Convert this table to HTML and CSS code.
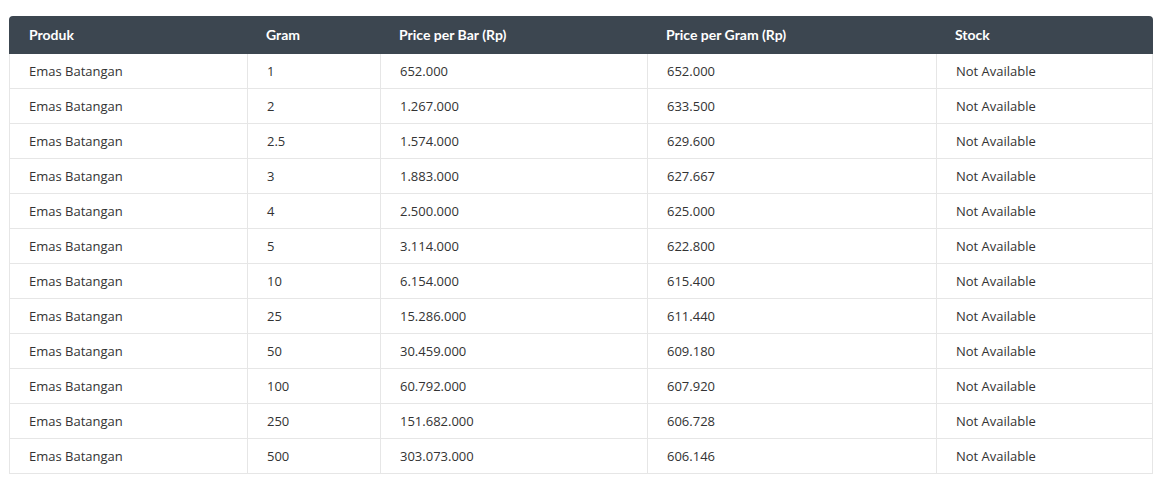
FILE: index.html
```html
<!DOCTYPE html>
<html>
<head>
<meta charset="utf-8">
<link rel="stylesheet" href="styles.css">
</head>
<body>
<div class="wrap">
<table class="price-table">
<colgroup>
<col class="c1"><col class="c2"><col class="c3"><col class="c4"><col class="c5">
</colgroup>
<thead>
<tr><th>Produk</th><th>Gram</th><th>Price per Bar (Rp)</th><th>Price per Gram (Rp)</th><th>Stock</th></tr>
</thead>
<tbody>
<tr><td>Emas Batangan</td><td>1</td><td>652.000</td><td>652.000</td><td>Not Available</td></tr>
<tr><td>Emas Batangan</td><td>2</td><td>1.267.000</td><td>633.500</td><td>Not Available</td></tr>
<tr><td>Emas Batangan</td><td>2.5</td><td>1.574.000</td><td>629.600</td><td>Not Available</td></tr>
<tr><td>Emas Batangan</td><td>3</td><td>1.883.000</td><td>627.667</td><td>Not Available</td></tr>
<tr><td>Emas Batangan</td><td>4</td><td>2.500.000</td><td>625.000</td><td>Not Available</td></tr>
<tr><td>Emas Batangan</td><td>5</td><td>3.114.000</td><td>622.800</td><td>Not Available</td></tr>
<tr><td>Emas Batangan</td><td>10</td><td>6.154.000</td><td>615.400</td><td>Not Available</td></tr>
<tr><td>Emas Batangan</td><td>25</td><td>15.286.000</td><td>611.440</td><td>Not Available</td></tr>
<tr><td>Emas Batangan</td><td>50</td><td>30.459.000</td><td>609.180</td><td>Not Available</td></tr>
<tr><td>Emas Batangan</td><td>100</td><td>60.792.000</td><td>607.920</td><td>Not Available</td></tr>
<tr><td>Emas Batangan</td><td>250</td><td>151.682.000</td><td>606.728</td><td>Not Available</td></tr>
<tr><td>Emas Batangan</td><td>500</td><td>303.073.000</td><td>606.146</td><td>Not Available</td></tr>
</tbody>
</table>
</div>
</body>
</html>
```
FILE: styles.css
```css
html, body {
  margin: 0;
  padding: 0;
  background: #fff;
}
.wrap {
  padding: 16px 13px 0 9px;
}
.price-table {
  width: 1144px;
  table-layout: fixed;
  border-collapse: separate;
  border-spacing: 0;
  font-family: "Open Sans", sans-serif;
  font-size: 13px;
  color: #333;
}
.c1 { width: 238px; }
.c2 { width: 133px; }
.c3 { width: 267px; }
.c4 { width: 289px; }
.c5 { width: 217px; }
.price-table th {
  background: #3c4650;
  color: #fff;
  font-family: Lato, sans-serif;
  font-weight: bold;
  font-size: 14px;
  text-align: left;
  height: 38px;
  padding: 0 0 1px 19px;
  box-sizing: border-box;
}
.price-table th:first-child {
  border-top-left-radius: 4px;
  padding-left: 20px;
}
.price-table th:last-child {
  border-top-right-radius: 4px;
}
.price-table td {
  height: 35px;
  box-sizing: border-box;
  padding: 0 0 0 19px;
  border-bottom: 1px solid #e6e6e6;
  border-left: 1px solid #e6e6e6;
}
.price-table td:last-child {
  border-right: 1px solid #e6e6e6;
}
```
